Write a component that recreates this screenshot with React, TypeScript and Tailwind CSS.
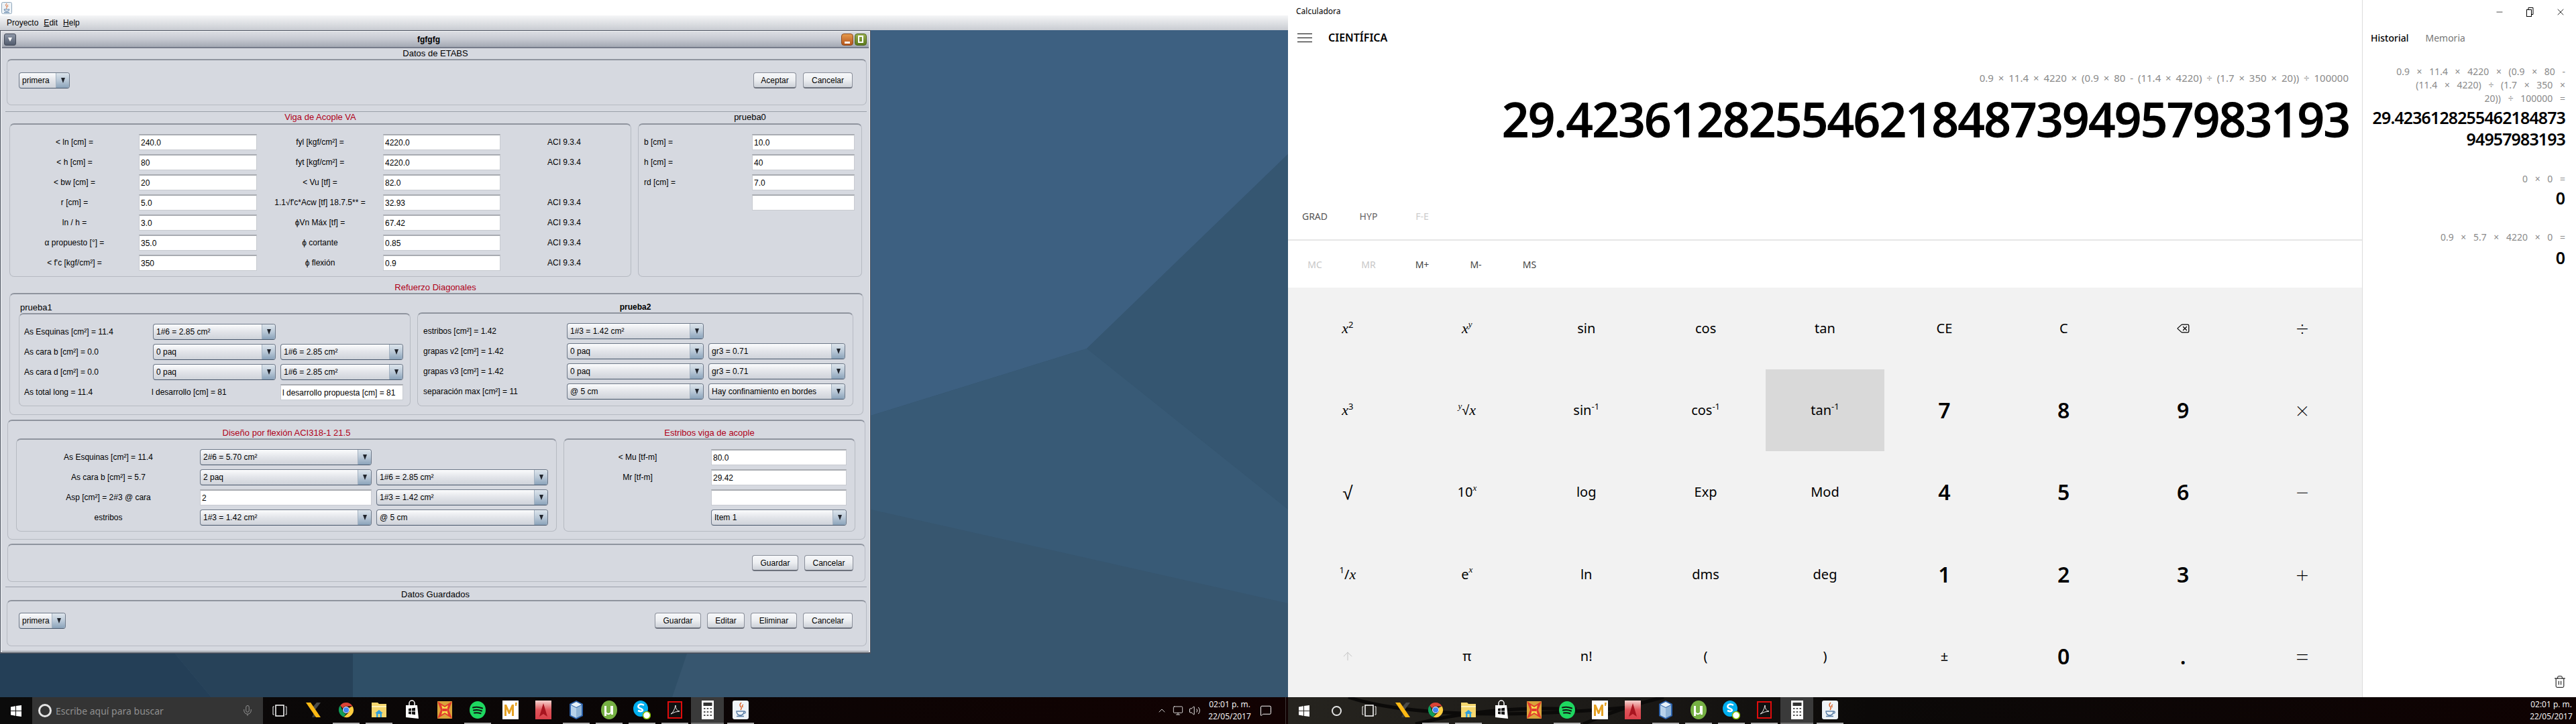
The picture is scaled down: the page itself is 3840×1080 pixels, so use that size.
import { ArrowUp, ChevronUp, Delete, MessageSquare, Mic, Minus, Monitor, Trash2, Volume2, X } from 'lucide-react';
import type { ReactNode } from 'react';

function Arrow() {
  return <span className="w-0 h-0 border-x-[3px] border-t-[8px] border-x-transparent border-t-[#20242c]"></span>;
}

function Combo({ text, w, arrow = 20 }: { text: string; w: number; arrow?: number }) {
  return (
    <div style={{ width: w }} className="h-[24px] flex rounded-[4px] border border-[#6d7888] border-b-[#47566a] overflow-hidden bg-gradient-to-b from-[#fbfcfd] via-[#e2e4e9] to-[#cfd3da] shrink-0">
      <div className="flex-1 pl-[4px] flex items-center whitespace-nowrap overflow-hidden">{text}</div>
      <div style={{ width: arrow }} className="flex items-center justify-center bg-gradient-to-b from-[#dde5ec] via-[#b9c8d7] to-[#8ba3ba] border-l border-[#a3b1c0]">
        <Arrow />
      </div>
    </div>
  );
}

function Field({ text = '', w }: { text?: string; w: number }) {
  return (
    <div style={{ width: w }} className="h-[24px] bg-white border border-[#c8cbd1] border-t-2 border-t-[#a8abb1] pl-[2px] flex items-center whitespace-nowrap shrink-0">{text}</div>
  );
}

function Btn({ text, w }: { text: string; w: number }) {
  return (
    <div style={{ width: w }} className="h-[24px] rounded-[4px] border border-[#8a8f9a] border-b-2 border-b-[#6c717c] bg-gradient-to-b from-[#f7f8fa] via-[#eceef1] to-[#cdd1d8] flex items-center justify-center">{text}</div>
  );
}

function Panel({ className = '', children }: { className?: string; children?: ReactNode }) {
  return <div className={`rounded-[7px] border border-[#b6bac2] border-t-2 border-t-[#8f949e] ${className}`}>{children}</div>;
}

function Legend({ text, red, className = '' }: { text: string; red?: boolean; className?: string }) {
  return <div className={`h-[16px] leading-[16px] text-center text-[13px] whitespace-nowrap ${red ? 'text-[#b00018]' : 'text-black'} ${className}`}>{text}</div>;
}

const vigaRows = [
  ['< ln [cm] =', '240.0', 'fyl [kgf/cm²] =', '4220.0', 'ACI 9.3.4'],
  ['< h [cm] =', '80', 'fyt [kgf/cm²] =', '4220.0', 'ACI 9.3.4'],
  ['< bw [cm] =', '20', '< Vu [tf] =', '82.0', ''],
  ['r [cm] =', '5.0', "1.1√f'c*Acw [tf] 18.7.5** =", '32.93', 'ACI 9.3.4'],
  ['ln / h =', '3.0', 'ϕVn Máx [tf] =', '67.42', 'ACI 9.3.4'],
  ['α propuesto [°] =', '35.0', 'ϕ cortante', '0.85', 'ACI 9.3.4'],
  ["< f'c [kgf/cm²] =", '350', 'ϕ flexión', '0.9', 'ACI 9.3.4'],
];

function JavaWindow() {
  return (
    <div className="w-[1298px] h-[930px] border border-[#4d5360] border-b-2 bg-[#d6d9e0] text-[12px] text-black font-['Liberation_Sans',sans-serif] flex flex-col shadow-[inset_0_0_0_1px_#eef0f3]">
      <div className="h-[25px] mx-[2px] mt-[1px] flex items-center justify-between px-[3px] bg-gradient-to-b from-[#dcdee3] via-[#c6c9d1] to-[#a4a9b4] border-b-2 border-[#767c8a]">
        <div className="w-[18px] h-[18px] rounded-[3px] bg-gradient-to-b from-[#8f98a8] to-[#525c6e] flex items-center justify-center border border-[#434a58]">
          <span className="w-0 h-0 border-x-[3px] border-t-[6px] border-x-transparent border-t-white"></span>
        </div>
        <span className="text-[12px] font-bold">fgfgfg</span>
        <div className="flex gap-[2px]">
          <div className="w-[18px] h-[18px] rounded-[4px] bg-gradient-to-b from-[#e59a4c] to-[#b5541a] border border-[#8b4a1d] flex items-end justify-center pb-[2px]"><span className="w-[8px] h-[3px] bg-white"></span></div>
          <div className="w-[18px] h-[18px] rounded-[4px] bg-gradient-to-b from-[#99b04e] to-[#5c7a1c] border border-[#4f6420] flex items-center justify-center"><span className="w-[8px] h-[11px] border-2 border-white"></span></div>
        </div>
      </div>

      <Legend text="Datos de ETABS" className="h-[16px]" />
      <Panel className="ml-[9px] w-[1282px] h-[69px] pt-[18px] pl-[17px] pr-[20px] flex justify-between items-start">
        <Combo text="primera" w={76} />
        <div className="flex gap-[10px]"><Btn text="Aceptar" w={64} /><Btn text="Cancelar" w={74} /></div>
      </Panel>

      <div className="mt-[9px] ml-[7px] w-[1284px] border-t border-[#9a9fa9]">
        <div className="flex gap-[10px] ml-[6px]">
          <div className="w-[927px]">
            <Legend text="Viga de Acople VA" red className="h-[17px]" />
            <Panel className="h-[229px] pt-[14px]">
              <div className="flex flex-col gap-[6px]">
                {vigaRows.map((r, i) => (
                  <div key={i} className="flex items-center">
                    <div className="w-[192px] text-center">{r[0]}</div>
                    <Field text={r[1]} w={176} />
                    <div className="w-[188px] text-center whitespace-nowrap">{r[2]}</div>
                    <Field text={r[3]} w={175} />
                    <div className="pl-[70px]">{r[4]}</div>
                  </div>
                ))}
              </div>
            </Panel>
          </div>
          <div className="w-[334px]">
            <Legend text="prueba0" className="h-[17px]" />
            <Panel className="h-[229px] pt-[14px] pl-[8px]">
              <div className="flex flex-col gap-[6px]">
                {[['b [cm] =', '10.0'], ['h [cm] =', '40'], ['rd [cm] =', '7.0'], ['', '']].map((r, i) => (
                  <div key={i} className="flex items-center"><div className="w-[161px]">{r[0]}</div><Field text={r[1]} w={153} /></div>
                ))}
              </div>
            </Panel>
          </div>
        </div>
      </div>

      <Legend text="Refuerzo Diagonales" red className="mt-[8px]" />
      <Panel className="ml-[13px] w-[1273px] h-[182px] pt-[12px] pl-[13px] flex gap-[10px]">
        <div className="w-[584px]">
          <div className="h-[16px] leading-[16px] text-[13px] pl-[2px]">prueba1</div>
          <Panel className="h-[139px] pt-[14px] pl-[7px]">
            <div className="flex flex-col gap-[6px]">
              <div className="flex items-center"><div className="w-[192px]">As Esquinas [cm²] = 11.4</div><Combo text="1#6 = 2.85 cm²" w={183} /></div>
              <div className="flex items-center gap-[7px]"><div className="w-[185px]">As cara b [cm²] = 0.0</div><Combo text="0 paq" w={183} /><Combo text="1#6 = 2.85 cm²" w={183} /></div>
              <div className="flex items-center gap-[7px]"><div className="w-[185px]">As cara d [cm²] = 0.0</div><Combo text="0 paq" w={183} /><Combo text="1#6 = 2.85 cm²" w={183} /></div>
              <div className="flex items-center"><div className="w-[190px]">As total long = 11.4</div><div className="w-[192px]">l desarrollo [cm] = 81</div><Field text="l desarrollo propuesta [cm] = 81" w={183} /></div>
            </div>
          </Panel>
        </div>
        <div className="w-[650px]">
          <div className="h-[15px] leading-[15px] text-[12px] font-bold text-center">prueba2</div>
          <Panel className="h-[140px] pt-[14px] pl-[8px]">
            <div className="flex flex-col gap-[6px]">
              <div className="flex items-center"><div className="w-[214px]">estribos [cm²] = 1.42</div><Combo text="1#3 = 1.42 cm²" w={204} /></div>
              <div className="flex items-center"><div className="w-[214px]">grapas v2 [cm²] = 1.42</div><Combo text="0 paq" w={204} /><div className="w-[7px]"></div><Combo text="gr3 = 0.71" w={204} /></div>
              <div className="flex items-center"><div className="w-[214px]">grapas v3 [cm²] = 1.42</div><Combo text="0 paq" w={204} /><div className="w-[7px]"></div><Combo text="gr3 = 0.71" w={204} /></div>
              <div className="flex items-center"><div className="w-[214px]">separación max [cm²] = 11</div><Combo text="@ 5 cm" w={204} /><div className="w-[7px]"></div><Combo text="Hay confinamiento en bordes" w={204} /></div>
            </div>
          </Panel>
        </div>
      </Panel>

      <Panel className="mt-[7px] ml-[10px] w-[1279px] h-[179px] pt-[10px] pl-[12px] flex gap-[10px]">
        <div className="w-[806px]">
          <Legend text="Diseño por flexión ACI318-1 21.5" red />
          <Panel className="h-[139px] pt-[14px]">
            <div className="flex flex-col gap-[6px]">
              <div className="flex items-center"><div className="w-[273px] text-center">As Esquinas [cm²] = 11.4</div><Combo text="2#6 = 5.70 cm²" w={256} /></div>
              <div className="flex items-center"><div className="w-[273px] text-center">As cara b [cm²] = 5.7</div><Combo text="2 paq" w={256} /><div className="w-[7px]"></div><Combo text="1#6 = 2.85 cm²" w={256} /></div>
              <div className="flex items-center"><div className="w-[273px] text-center">Asp [cm²] = 2#3 @ cara</div><Field text="2" w={256} /><div className="w-[7px]"></div><Combo text="1#3 = 1.42 cm²" w={256} /></div>
              <div className="flex items-center"><div className="w-[273px] text-center">estribos</div><Combo text="1#3 = 1.42 cm²" w={256} /><div className="w-[7px]"></div><Combo text="@ 5 cm" w={256} /></div>
            </div>
          </Panel>
        </div>
        <div className="w-[435px]">
          <Legend text="Estribos viga de acople" red />
          <Panel className="h-[139px] pt-[14px]">
            <div className="flex flex-col gap-[6px]">
              <div className="flex items-center"><div className="w-[219px] text-center">{'< Mu [tf-m]'}</div><Field text="80.0" w={202} /></div>
              <div className="flex items-center"><div className="w-[219px] text-center">Mr [tf-m]</div><Field text="29.42" w={202} /></div>
              <div className="flex items-center"><div className="w-[219px]"></div><Field w={202} /></div>
              <div className="flex items-center"><div className="w-[219px]"></div><Combo text="Item 1" w={202} /></div>
            </div>
          </Panel>
        </div>
      </Panel>

      <Panel className="mt-[6px] ml-[10px] w-[1279px] h-[57px] pt-[15px] pr-[17px] flex justify-end gap-[9px]">
        <Btn text="Guardar" w={69} />
        <Btn text="Cancelar" w={73} />
      </Panel>

      <div className="mt-[7px] ml-[7px] w-[1284px] border-t border-[#9a9fa9]"></div>
      <Legend text="Datos Guardados" className="mt-[3px]" />
      <Panel className="ml-[9px] w-[1282px] h-[69px] pt-[17px] pl-[17px] pr-[20px] flex justify-between items-start">
        <Combo text="primera" w={70} />
        <div className="flex gap-[9px]">
          <Btn text="Guardar" w={69} /><Btn text="Editar" w={56} /><Btn text="Eliminar" w={69} /><Btn text="Cancelar" w={74} />
        </div>
      </Panel>
      <div className="mt-[7px] mx-[2px] border-t border-[#80858f]"></div>
    </div>
  );
}

function WinLogo() {
  return (
    <svg width="16" height="17" viewBox="0 0 16 17" fill="#fff">
      <polygon points="0,2.4 7,1.3 7,8 0,8" />
      <polygon points="8,1.1 16,0 16,8 8,8" />
      <polygon points="0,9 7,9 7,15.7 0,14.6" />
      <polygon points="8,9 16,9 16,17 8,15.9" />
    </svg>
  );
}

function TaskView() {
  return (
    <svg width="22" height="18" viewBox="0 0 22 18" fill="none" stroke="#fff" strokeWidth="1.5">
      <rect x="5" y="1" width="12" height="16" />
      <path d="M2.5 3H1v12h1.5M19.5 3H21v12h-1.5" strokeWidth="1" />
    </svg>
  );
}

const taskIcons: { key: string; on: boolean; active?: boolean; icon: ReactNode }[] = [
  { key: 'x', on: false, icon: (
    <svg width="26" height="24" viewBox="0 0 26 24">
      <path d="M24 1 L15 13 L11 9 L18 1Z" fill="#4a4a48" /><path d="M11 23 L16 12 L19 16 L15 23Z" fill="#3a3a38" />
      <path d="M2 1 H9 L24 23 H17Z" fill="#fdb913" />
    </svg>) },
  { key: 'chrome', on: true, icon: (
    <svg width="24" height="24" viewBox="0 0 24 24">
      <path d="M12 1a11 11 0 0 1 9.5 5.5H12a5.5 5.5 0 0 0-5 3.2L3.200 5.300A11 11 0 0 1 12 1z" fill="#db4437" />
      <path d="M3.200 5.300 L7.500 15.300 A5.500 5.500 0 0 0 12 17.500 L8.600 22.500 A11 11 0 0 1 3.200 5.300Z" fill="#0f9d58" />
      <path d="M21.500 6.500A11 11 0 0 1 8.600 22.500L14.500 17a5.500 5.500 0 0 0 1.500-8z" fill="#ffcd40" />
      <circle cx="12" cy="12" r="5" fill="#fff" /><circle cx="12" cy="12" r="4" fill="#4285f4" />
    </svg>) },
  { key: 'folder', on: true, icon: (
    <svg width="22" height="24" viewBox="0 0 22 24">
      <path d="M0 1h9l2 2h11v20H0z" fill="#f5d76e" /><path d="M0 6h22v2H0z" fill="#fff2b8" />
      <path d="M11 12l6 5h-2v6H7v-6H5z" fill="#2f9fdc" /><rect x="9.500" y="18" width="3" height="5" fill="#f5d76e" />
    </svg>) },
  { key: 'store', on: false, icon: (
    <svg width="22" height="30" viewBox="0 0 22 30">
      <path d="M7 8V5a4 4 0 0 1 8 0v3" fill="none" stroke="#fff" strokeWidth="1.500" />
      <path d="M2 8h17l2 20-19-2z" fill="#fff" />
      <path d="M6 13l4-.5v4H6zM11 12.400l5-.6v4.700h-5zM6 17.500h4v4l-4-.5zM11 17.500h5v4.700l-5-.6z" fill="#111" />
    </svg>) },
  { key: 'red', on: false, icon: (
    <svg width="24" height="28" viewBox="0 0 24 28">
      <rect x="1" y="1" width="22" height="26" fill="#d9a33a" />
      <path d="M1 1L12 8 23 1 18 14 23 27 12 20 1 27 6 14z" fill="#e23b2e" />
      <path d="M7 7L12 10 17 7 15 14 17 21 12 18 7 21 9 14z" fill="#f5e04a" />
      <rect x="9" y="12" width="6" height="4" fill="#e23b2e" />
    </svg>) },
  { key: 'spotify', on: true, icon: (
    <svg width="24" height="26" viewBox="0 0 24 26">
      <ellipse cx="12" cy="13" rx="12" ry="13" fill="#1ed760" />
      <path d="M5 9.500q7-2 14 1M6 13.500q6-1.500 12 1M7 17.500q5-1 9.500 .8" fill="none" stroke="#111" strokeWidth="2" strokeLinecap="round" />
    </svg>) },
  { key: 'm', on: false, icon: (
    <svg width="24" height="28" viewBox="0 0 24 28">
      <rect width="24" height="28" fill="#fff" />
      <path d="M3 23V6h3l4 9 4-9h3v17h-3V13l-3 7h-2l-3-7v10z" fill="#e5a124" /><path d="M19 3h3l-1 5h-2z" fill="#e5a124" />
    </svg>) },
  { key: 'arrow', on: false, icon: (
    <svg width="24" height="28" viewBox="0 0 24 28">
      <defs><linearGradient id="ra" x1="0" y1="0" x2="0" y2="1"><stop offset="0" stopColor="#f6d5d0" /><stop offset=".5" stopColor="#e0555a" /><stop offset="1" stopColor="#d9404a" /></linearGradient></defs>
      <rect width="24" height="28" fill="url(#ra)" />
      <path d="M12 4l6 20-6-4-6 4z" fill="#a81520" />
    </svg>) },
  { key: 'cube', on: true, icon: (
    <svg width="22" height="28" viewBox="0 0 22 28">
      <path d="M11 0l10 5v18l-10 5L1 23V5z" fill="#2a5fa8" />
      <path d="M11 2l8 4-8 4-8-4z" fill="#e7f1f8" /><path d="M3 7l8 4v15l-8-4z" fill="#b8d2ea" /><path d="M19 7l-8 4v15l8-4z" fill="#8fb3d6" />
    </svg>) },
  { key: 'utorrent', on: true, icon: (
    <svg width="24" height="28" viewBox="0 0 24 28">
      <ellipse cx="12" cy="14" rx="12" ry="14" fill="#76b043" />
      <path d="M5 8h3v8q0 3 3 3t3-3V8h4v13h-3v-2q-2 2.500-5 2-2-.3-2-2v4H5z" fill="#fff" />
    </svg>) },
  { key: 'skype', on: true, icon: (
    <svg width="26" height="28" viewBox="0 0 26 28">
      <ellipse cx="11" cy="12" rx="11" ry="12" fill="#00aff0" />
      <path d="M16 7q-5-3-8 0-2 3 2 4.500t4 3q-1 3-7 .5" fill="none" stroke="#fff" strokeWidth="2.500" />
      <circle cx="20" cy="22" r="5.500" fill="#fff" stroke="#7fba00" strokeWidth="1.500" />
    </svg>) },
  { key: 'adobe', on: true, icon: (
    <svg width="22" height="26" viewBox="0 0 22 26">
      <rect x="1" y="1" width="20" height="24" fill="#111" stroke="#e00c0c" strokeWidth="2" />
      <path d="M5 19q5-3 7-13 0 8 6 9-6 0-13 4z" fill="none" stroke="#eee" strokeWidth="1" />
    </svg>) },
  { key: 'calc', on: true, active: true, icon: (
    <svg width="18" height="28" viewBox="0 0 18 28">
      <rect width="18" height="28" fill="#fff" /><rect x="2.500" y="3" width="13" height="5" fill="#333" />
      <path d="M3 11h2.500v2H3zM7.700 11h2.500v2H7.700zM12.500 11H15v2h-2.500zM3 16h2.500v2H3zM7.700 16h2.500v2H7.700zM12.500 16H15v2h-2.500zM3 21h2.500v2H3zM7.700 21h2.500v2H7.700zM12.500 21H15v2h-2.500z" fill="#555" />
    </svg>) },
  { key: 'java', on: true, icon: (
    <svg width="24" height="28" viewBox="0 0 24 28">
      <rect width="24" height="28" rx="3" fill="#eef3f7" />
      <path d="M13 3q-4 4 0 7 1 2-1 4M16 6q-3 2-.5 4" fill="none" stroke="#d9652b" strokeWidth="1.500" />
      <path d="M6 16h11v1q-1 5-5.500 5T6 17zM17 16q3 0 2 2.500l-2 1M6 23.500h11" fill="none" stroke="#5a7ea5" strokeWidth="1.300" />
    </svg>) },
];

function TaskIcons() {
  return (
    <>
      {taskIcons.map(t => (
        <div key={t.key} className={`w-[49px] h-full flex flex-col items-center ${t.active ? 'bg-[#3a3a3a]' : ''}`}>
          <div className="flex-1 flex items-center justify-center">{t.icon}</div>
          <div className={`h-[2px] ${t.active ? 'w-full bg-[#777]' : 'w-[40px]'} ${t.on && !t.active ? 'bg-[#aeaeae]' : ''}`}></div>
        </div>
      ))}
    </>
  );
}

function Clock({ w }: { w: string }) {
  return (
    <div className={`${w} text-white text-[12px] leading-[18px] font-['Open_Sans',sans-serif] text-center`}>
      <div>02:01 p. m.</div>
      <div>22/05/2017</div>
    </div>
  );
}

function LeftScreen() {
  return (
    <div className="w-[1920px] h-[1080px] flex flex-col relative shrink-0">
      {/* wallpaper */}
      <svg className="absolute inset-0 -z-10" width="1920" height="1080" viewBox="0 0 1920 1080">
        <rect width="1920" height="1080" fill="#37566f" />
        <polygon points="1298,0 1920,0 1920,230 1620,520 1298,620" fill="#3d6081" />
        <polygon points="1620,520 1920,230 1920,760" fill="#355671" />
        <polygon points="1298,620 1620,520 1920,760 1920,900 1298,760" fill="#385a76" />
        <polygon points="526,975 1024,975 1002,1040 526,1040" fill="#2f4f67" />
        <polygon points="0,975 261,975 315,1040 0,1040" fill="#243f57" />
        <polygon points="261,975 526,975 526,1040 315,1040" fill="#274259" />
      </svg>
      <div className="h-[23px] bg-white flex items-center pl-[2px]">
        <svg width="16" height="18" viewBox="0 0 16 18">
          <rect x=".5" y=".5" width="15" height="17" rx="2" fill="#eef3f7" stroke="#8ea6bb" />
          <path d="M8 2q-3 3 0 5 1 1-1 3M10 4q-2 1.500 0 3" fill="none" stroke="#d9652b" />
          <path d="M4 11h8q-.5 3-4 3t-4-3zM4 15.500h8" fill="none" stroke="#5a7ea5" />
        </svg>
      </div>
      <div className="h-[22px] bg-gradient-to-b from-[#f5f6f7] to-[#c9ccd2] pl-[10px] flex items-center gap-[8px] text-[12px] text-black font-['Liberation_Sans',sans-serif]">
        <span>Proyecto</span>
        <span><span className="underline">E</span>dit</span>
        <span><span className="underline">H</span>elp</span>
      </div>
      <JavaWindow />
      <div className="flex-1"></div>
      <div className="h-[40px] flex items-center bg-gradient-to-r from-[#0b0b0b] via-[#0a0505] to-[#120202]">
        <div className="w-[48px] h-full flex items-center justify-center"><WinLogo /></div>
        <div className="w-[344px] h-full bg-[#343434] flex items-center pl-[9px] pr-[14px]">
          <div className="w-[20px] h-[20px] rounded-full border-[3px] border-[#e4e4e4]"></div>
          <span className="ml-[6px] flex-1 text-[14px] text-[#8f8f8f] font-['Noto_Sans',sans-serif]">Escribe aquí para buscar</span>
          <Mic className="w-[18px] h-[20px] text-[#9a9a9a]" strokeWidth={1.2} />
        </div>
        <div className="w-[50px] h-full flex items-center justify-center"><TaskView /></div>
        <TaskIcons />
        <div className="flex-1"></div>
        <ChevronUp className="w-[16px] h-[16px] text-white" strokeWidth={1.2} />
        <Monitor className="ml-[8px] w-[16px] h-[16px] text-white" strokeWidth={1.2} />
        <Volume2 className="ml-[8px] w-[18px] h-[18px] text-white" strokeWidth={1.2} />
        <Clock w="w-[78px] ml-[4px]" />
        <MessageSquare className="ml-[6px] w-[18px] h-[20px] text-white" strokeWidth={1.3} />
        <div className="ml-[20px] w-px h-full bg-[#3c3636]"></div>
        <div className="w-[3px]"></div>
      </div>
    </div>
  );
}

function It({ children }: { children: ReactNode }) {
  return <span className="font-['Liberation_Serif',serif] italic text-[22px]">{children}</span>;
}

function Sup({ children, it }: { children: ReactNode; it?: boolean }) {
  return <sup className={`text-[13px] ${it ? "font-['Liberation_Serif',serif] italic" : ''}`}>{children}</sup>;
}

const keyFns: ReactNode[] = [
  <><It>x</It><Sup>2</Sup></>, <><It>x</It><Sup it>y</Sup></>, 'sin', 'cos', 'tan',
  <><It>x</It><Sup>3</Sup></>, <><Sup it>y</Sup>√<It>x</It></>, <>sin<Sup>-1</Sup></>, <>cos<Sup>-1</Sup></>, <>tan<Sup>-1</Sup></>,
  <span className="text-[28px]">√</span>, <>10<Sup it>x</Sup></>, 'log', 'Exp', 'Mod',
  <><Sup>1</Sup>/<It>x</It></>, <>e<Sup it>x</Sup></>, 'ln', 'dms', 'deg',
  <ArrowUp className="w-[20px] h-[20px] text-[#c4c4c4]" strokeWidth={1.2} />, 'π', 'n!', '(', ')',
];

const keyNums: ReactNode[] = [
  'CE', 'C', <Delete key="b" className="w-[21px] h-[20px]" strokeWidth={1.5} />, '÷',
  '7', '8', '9', '×',
  '4', '5', '6', '−',
  '1', '2', '3', '+',
  '±', '0', '.', '=',
];

function CalcKeys() {
  const cells: { n: ReactNode; cls: string; hot?: boolean }[] = [];
  for (let r = 0; r < 5; r++) {
    for (let c = 0; c < 5; c++) cells.push({ n: keyFns[r * 5 + c], cls: 'text-[20px]', hot: r === 1 && c === 4 });
    for (let c = 0; c < 4; c++) {
      const n = keyNums[r * 4 + c];
      const isDigit = typeof n === 'string' && /^[0-9.]$/.test(n);
      cells.push({ n, cls: c === 3 ? 'text-[34px] font-extralight' : isDigit ? 'text-[32px] font-semibold' : 'text-[20px]' });
    }
  }
  return (
    <div className="h-[611px] grid grid-cols-9 grid-rows-5 bg-[#f2f2f2]">
      {cells.map((k, i) => (
        <div key={i} className={`flex items-center justify-center leading-none ${k.hot ? 'bg-[#d9d9d9]' : ''} ${k.cls}`}>
          {k.n}
        </div>
      ))}
    </div>
  );
}

function RightScreen() {
  return (
    <div className="w-[1920px] h-[1080px] flex flex-col shrink-0 bg-white text-black font-['Noto_Sans',sans-serif]">
      <div className="h-[1040px] flex">
        <div className="w-[1601px] flex flex-col">
          <div className="h-[36px] pl-[12px] pt-[7px] text-[12px] leading-[20px]">Calculadora</div>
          <div className="h-[40px] flex items-center pl-[14px]">
            <div className="w-[22px] flex flex-col gap-[5px]">
              <span className="h-px bg-black"></span><span className="h-px bg-black"></span><span className="h-px bg-black"></span>
            </div>
            <span className="ml-[24px] text-[16px] font-semibold">CIENTÍFICA</span>
          </div>
          <div className="h-[28px] mt-[26px] text-right pr-[20px] text-[15px] leading-[28px] text-[#8a8a8a] [word-spacing:3px] whitespace-nowrap">0.9 × 11.4 × 4220 × (0.9 × 80 - (11.4 × 4220) ÷ (1.7 × 350 × 20)) ÷ 100000</div>
          <div className="h-[90px] mt-[2px] text-right pr-[19px] text-[72px] leading-[90px] font-semibold tracking-[-2.250px] whitespace-nowrap">29.423612825546218487394957983193</div>
          <div className="flex-1 flex flex-col justify-end">
            <div className="h-[70px] flex items-center text-[14px]">
              <span className="w-[80px] text-center text-[#555]">GRAD</span>
              <span className="w-[80px] text-center text-[#666]">HYP</span>
              <span className="w-[80px] text-center text-[#ccc]">F-E</span>
            </div>
            <div className="h-[72px] flex items-center border-t-2 border-[#e6e6e6] text-[14px]">
              <span className="w-[80px] text-center text-[#c8c8c8]">MC</span>
              <span className="w-[80px] text-center text-[#c8c8c8]">MR</span>
              <span className="w-[80px] text-center text-[#444]">M+</span>
              <span className="w-[80px] text-center text-[#444]">M-</span>
              <span className="w-[80px] text-center text-[#444]">MS</span>
            </div>
          </div>
          <CalcKeys />
        </div>
        <div className="flex-1 border-l border-[#dcdcdc] flex flex-col pr-[16px]">
          <div className="h-[36px] flex items-center justify-end gap-[32px] -mr-[1px]">
            <Minus className="w-[14px] h-[14px]" strokeWidth={1.2} />
            <svg width="12" height="14" viewBox="0 0 12 14" fill="none" stroke="#000" strokeWidth="1"><rect x="1.500" y="3.500" width="7" height="10" /><path d="M4 3V.5h7v10H9" /></svg>
            <X className="w-[16px] h-[16px]" strokeWidth={1.2} />
          </div>
          <div className="h-[40px] pl-[12px] flex items-center gap-[25px] text-[14px]">
            <span className="font-medium">Historial</span>
            <span className="text-[#777]">Memoria</span>
          </div>
          <div className="mt-[21px] text-right text-[14px] leading-[20px] text-[#8a8a8a] [word-spacing:7px] whitespace-nowrap">
            <div>0.9 × 11.4 × 4220 × (0.9 × 80 -</div>
            <div>(11.4 × 4220) ÷ (1.7 × 350 ×</div>
            <div>20)) ÷ 100000 =</div>
          </div>
          <div className="mt-[2px] text-right text-[25px] leading-[32px] font-semibold tracking-[-0.900px] whitespace-nowrap">
            <div>29.4236128255462184873</div>
            <div>94957983193</div>
          </div>
          <div className="mt-[34px] text-right text-[14px] leading-[20px] text-[#8a8a8a] [word-spacing:7px]">0 × 0 =</div>
          <div className="mt-[2px] text-right text-[25px] leading-[32px] font-semibold">0</div>
          <div className="mt-[33px] text-right text-[14px] leading-[20px] text-[#8a8a8a] [word-spacing:7px]">0.9 × 5.7 × 4220 × 0 =</div>
          <div className="mt-[4px] text-right text-[25px] leading-[32px] font-semibold">0</div>
          <div className="flex-1 flex items-end justify-end pb-[12px] -mr-[2px]">
            <Trash2 className="w-[20px] h-[22px]" strokeWidth={1.2} />
          </div>
        </div>
      </div>
      <div className="h-[40px] flex items-center relative z-0 bg-[linear-gradient(90deg,#26241f_0%,#1c1a17_25%,#0b0908_45%,#0f0202_100%)]">
        <svg className="absolute inset-0 -z-10" width="1920" height="40" viewBox="0 0 1920 40" fill="none" stroke="#0b0a09" strokeWidth="5">
          <path d="M90 0 Q150 20 260 24 T520 14" />
          <path d="M190 40 Q300 12 430 18" />
          <path d="M560 0 Q500 14 440 40" />
        </svg>
        <div className="w-[48px] h-full flex items-center justify-center"><WinLogo /></div>
        <div className="w-[48px] h-full flex items-center justify-center"><div className="w-[15px] h-[15px] rounded-full border-2 border-[#e4e4e4]"></div></div>
        <div className="w-[50px] h-full flex items-center justify-center"><TaskView /></div>
        <TaskIcons />
        <div className="flex-1"></div>
        <Clock w="w-[70px] mr-[2px]" />
      </div>
    </div>
  );
}

export default function App() {
  return (
    <div className="w-[3840px] h-[1080px] flex overflow-hidden relative z-0">
      <LeftScreen />
      <RightScreen />
    </div>
  );
}
